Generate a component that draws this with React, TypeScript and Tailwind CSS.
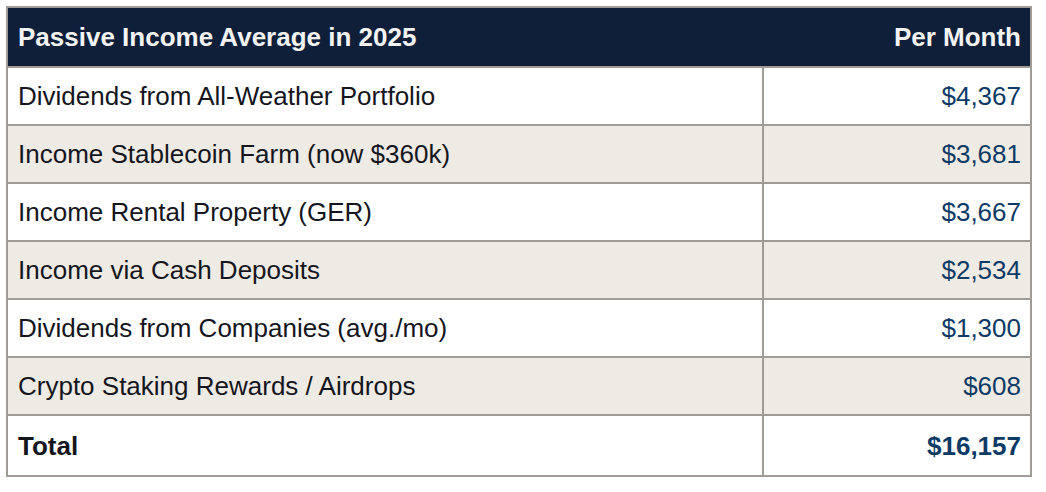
import React from "react";

const rows = [
  { label: "Dividends from All-Weather Portfolio", value: "$4,367" },
  { label: "Income Stablecoin Farm (now $360k)", value: "$3,681" },
  { label: "Income Rental Property (GER)", value: "$3,667" },
  { label: "Income via Cash Deposits", value: "$2,534" },
  { label: "Dividends from Companies (avg./mo)", value: "$1,300" },
  { label: "Crypto Staking Rewards / Airdrops", value: "$608" },
];

export default function App() {
  return (
    <div className="w-[1046px] h-[492px] bg-white pt-[6px] pl-[6px] font-['Liberation_Sans',Arial,sans-serif] text-[26px] leading-none">
      <div className="w-[1026px] border-2 border-[#a09b95]">
        {/* Header */}
        <div className="h-[58px] bg-[#0f1f3a] text-[#f3f3f3] font-bold flex items-center justify-between pl-[10px] pr-[9px]">
          <span>Passive Income Average in 2025</span>
          <span>Per Month</span>
        </div>

        {rows.map((r, i) => (
          <div
            key={r.label}
            className={`grid grid-cols-[756px_1fr] h-[58px] border-t-2 border-[#a09b95] ${i % 2 === 1 ? "bg-[#eeeae4]" : "bg-white"}`}
          >
            <div className="flex items-center pl-[10px] text-[#15161d] border-r-2 border-[#a09b95]">
              {r.label}
            </div>
            <div className="flex items-center justify-end pr-[9px] text-[#0e3a66]">
              {r.value}
            </div>
          </div>
        ))}

        {/* Total */}
        <div className="grid grid-cols-[756px_1fr] h-[61px] border-t-2 border-[#a09b95] bg-white font-bold">
          <div className="flex items-center pl-[10px] text-[#15161d] border-r-2 border-[#a09b95]">
            Total
          </div>
          <div className="flex items-center justify-end pr-[9px] text-[#0e3a66]">
            $16,157
          </div>
        </div>
      </div>
    </div>
  );
}
